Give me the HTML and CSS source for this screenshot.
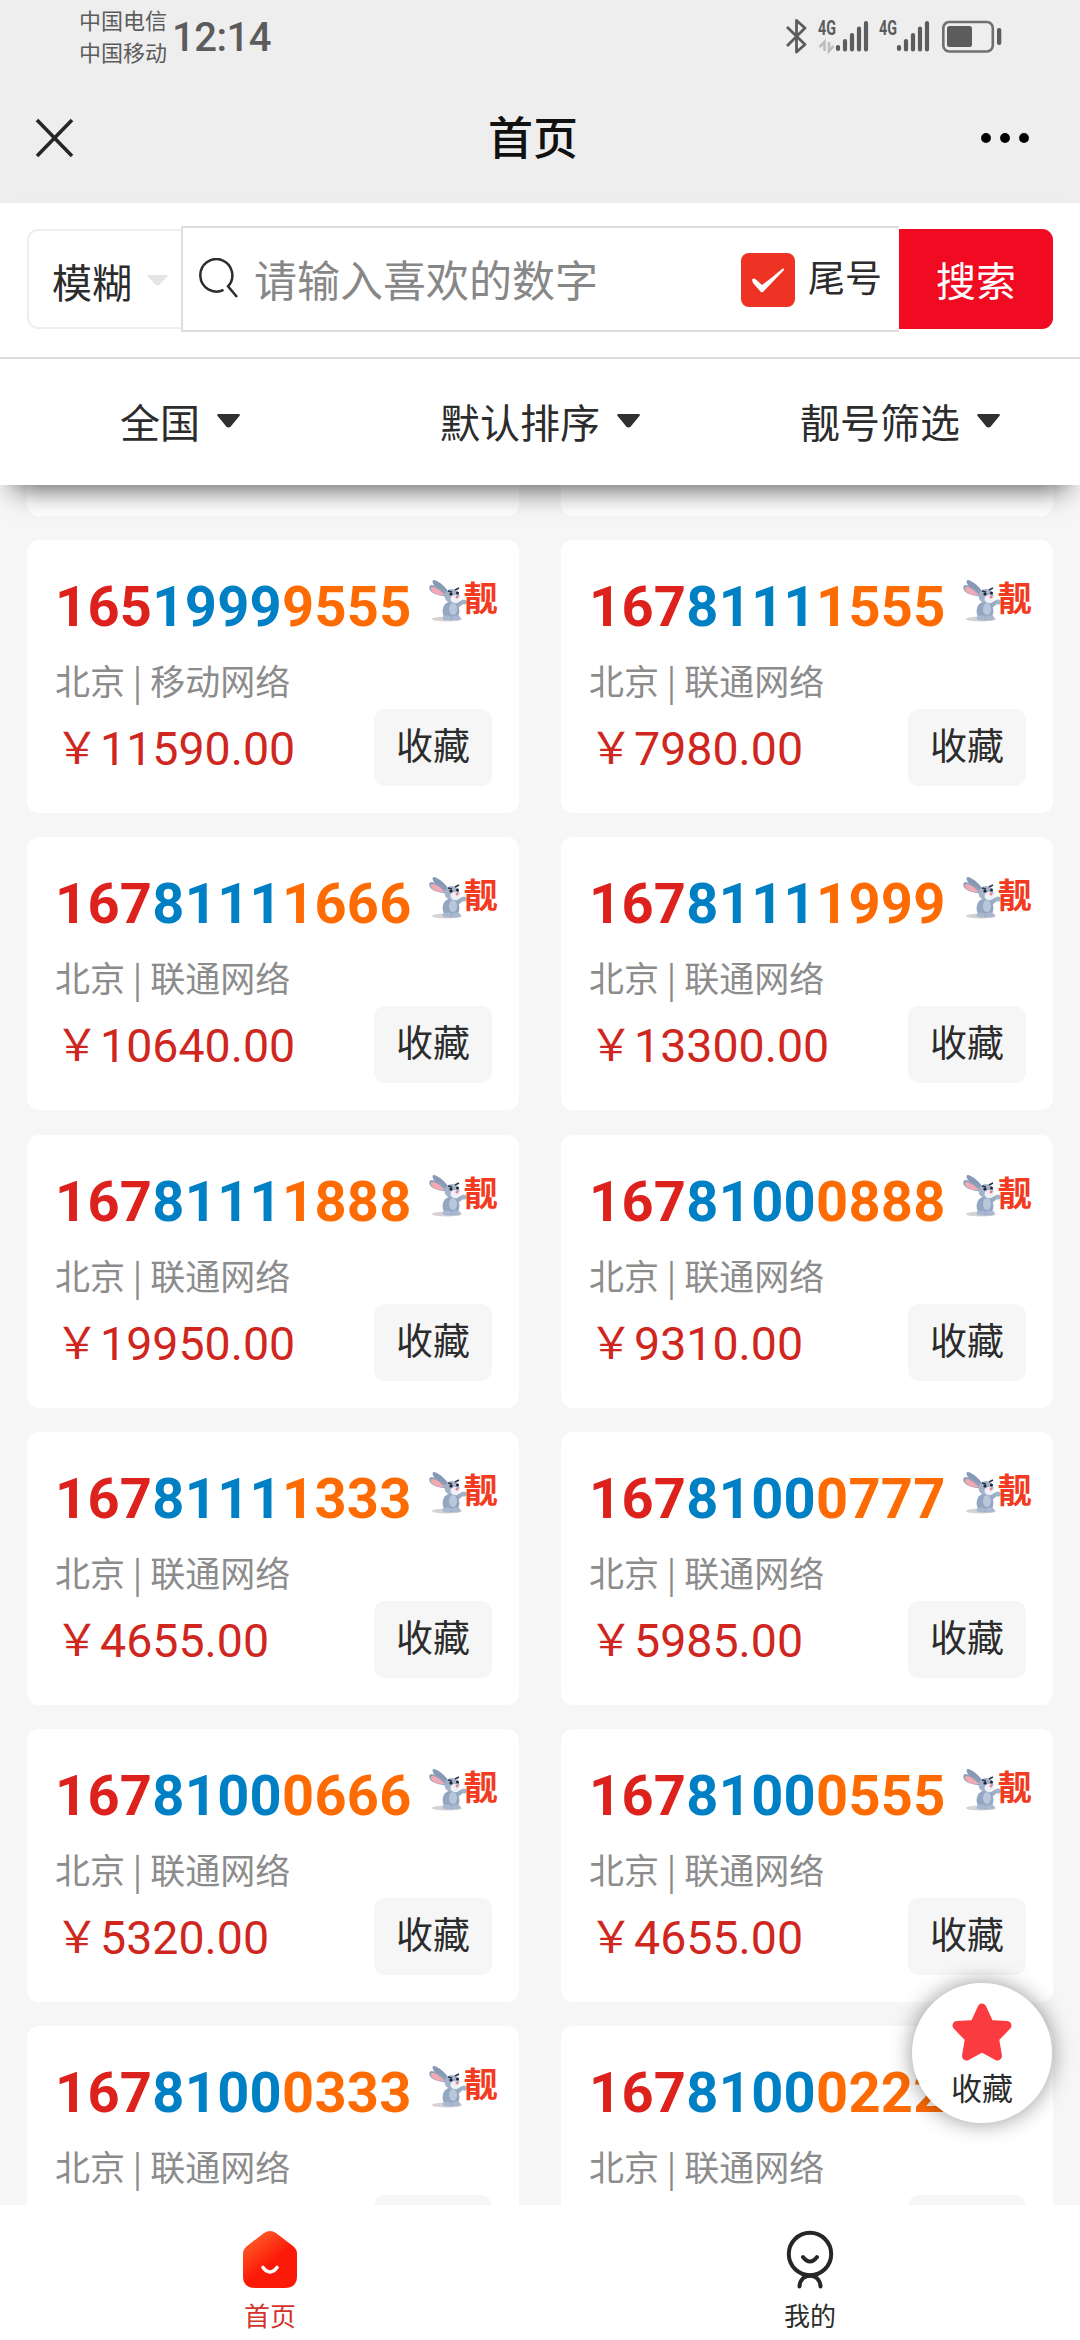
FILE: index.html
```html
<!DOCTYPE html>
<html lang="zh-CN">
<head>
    <meta charset="UTF-8">
    <meta name="viewport" content="width=device-width, initial-scale=1.0">
    <title>首页</title>
    <link rel="stylesheet" href="styles.css">
</head>
<body>
    <svg class="defs">
        <symbol id="rabbit" viewBox="0 0 38 44">
            <ellipse cx="18" cy="40" rx="15" ry="2.6" fill="#d6d2d4"/>
            <path d="M21 15C17 8 10 2 5 1c-3 0-1 5 3 8s9 6 12 8z" fill="#8799b5"/>
            <path d="M19 18C13 16 9 17 4 14 0 12-1 7 2 6c5 0 12 5 18 9z" fill="#8fa0ba"/>
            <path d="M16 16c-4 0-8 0-11-2C2 12 1 9 3 8c4 0 8 3 13 8z" fill="#f3a9b3"/>
            <path d="M26 25l7-4 2 3-7 6z" fill="#9badc4"/>
            <ellipse cx="22" cy="32" rx="8.500" ry="9.500" fill="#93a6c2"/>
            <ellipse cx="24" cy="30" rx="4" ry="6" fill="#b9c7da"/>
            <ellipse cx="18" cy="39" rx="4.500" ry="2.500" fill="#a9b8d0"/>
            <ellipse cx="27" cy="39" rx="4.500" ry="2.500" fill="#a9b8d0"/>
            <ellipse cx="23" cy="17" rx="7.500" ry="7" fill="#a3b2ca"/>
            <ellipse cx="26" cy="20" rx="4.500" ry="4" fill="#eef1f6"/>
            <path d="M19 12l4 1M26 11l4-2" stroke="#2b3140" stroke-width="1.500"/>
            <circle cx="22" cy="15" r="1.600" fill="#20242e"/>
            <circle cx="28.500" cy="14" r="1.500" fill="#20242e"/>
            <circle cx="28" cy="18" r="1.500" fill="#ee7f93"/>
            <circle cx="35" cy="23" r="2.600" fill="#a3b4ca"/>
        </symbol>
    </svg>

    <header>
        <div class="status">
            <div class="carrier">
                <span>中国电信</span>
                <span>中国移动</span>
            </div>
            <span class="clock">12:14</span>
            <svg class="status-icons" width="230" height="40" viewBox="780 15 230 40">
                <path d="M787 27l18 17.500-8.500 7.500V20.500l8.500 7.500-18 18" fill="none" stroke="#5c5c5c" stroke-width="2.800" stroke-linejoin="round"/>
                <g class="net">
                    <text x="818" y="35" textLength="18" lengthAdjust="spacingAndGlyphs">4G</text>
                    <text x="879" y="35" textLength="18" lengthAdjust="spacingAndGlyphs">4G</text>
                </g>
                <path d="M824.500 51V42l-5 5M829 42v9l4.500-5" fill="none" stroke="#bdbdbd" stroke-width="2.600"/>
                <path d="M838 47v2M845 41v8.500M852 35v14.500M859 28.500v21M866 23v26.500M899 47v2M906 41v8.500M913 35v14.500M920 28.500v21M927 23v26.500" stroke="#5c5c5c" stroke-width="4.200" stroke-linecap="round"/>
                <rect x="943.300" y="22" width="49.500" height="29.500" rx="6" fill="none" stroke="#707070" stroke-width="2.600"/>
                <rect x="947" y="26" width="25" height="21" rx="2.500" fill="#5c5c5c"/>
                <rect x="997" y="28" width="4.300" height="17" rx="2" fill="#5c5c5c"/>
            </svg>
        </div>
        <div class="nav">
            <svg width="40" height="40" viewBox="0 0 40 40"><path d="M2 2l35 36M37 2L2 38" stroke="#262626" stroke-width="3.600"/></svg>
            <h1>首页</h1>
            <svg width="50" height="12" viewBox="0 0 50 12"><circle cx="6" cy="6" r="4.900"/><circle cx="25" cy="6" r="4.900"/><circle cx="44" cy="6" r="4.900"/></svg>
        </div>
    </header>

    <div class="top">
        <div class="search">
            <div class="mode">模糊<i class="caret light"></i></div>
            <div class="field">
                <svg width="40" height="42" viewBox="0 0 40 42"><path d="M25.500 31.800a16 16.200 0 1 1 4.500-3.400L39 39" fill="none" stroke="#2c2c2c" stroke-width="2.500"/></svg>
                <span class="placeholder">请输入喜欢的数字</span>
                <span class="check">
                    <svg width="54" height="54" viewBox="0 0 54 54"><path d="M11 27c1-2 2-2 4-.5l6 5.500c8-6 14-11 20-16 2-1.500 3 0 1.500 1.500L23 38c-1.500 1.800-3 1.500-4 0l-7-8z" fill="#fff"/></svg>
                </span>
                <span class="tail">尾号</span>
            </div>
            <div class="search-btn">搜索</div>
        </div>
        <div class="filters">
            <div>全国<i class="caret"></i></div>
            <div>默认排序<i class="caret"></i></div>
            <div>靓号筛选<i class="caret"></i></div>
        </div>
    </div>

    <div class="list" id="list">
        <div class="card last-seen"></div>
        <div class="card last-seen"></div>
    </div>

    <div class="fab">
        <svg width="60" height="58" viewBox="0 0 60 58"><path d="M30 5l7.500 16.500L55 22.500 42.500 35.500 45.500 53 30 44.500 14.500 53l3-17.500L5 22.500l17.500-1z" fill="#fa3c41" stroke="#fa3c41" stroke-width="9" stroke-linejoin="round"/></svg>
        <span>收藏</span>
    </div>

    <footer>
        <div class="tab active">
            <svg width="56" height="60" viewBox="0 0 56 60">
                <defs><linearGradient id="home" x1="0.100" y1="0" x2="0.700" y2="0.800"><stop offset="0" stop-color="#ff6a2c"/><stop offset="0.700" stop-color="#fb1a08"/></linearGradient></defs>
                <path d="M22 3q6-4 12 0l17 13q4 3 4 8v22q0 12-12 12H13Q1 58 1 46V24q0-5 4-8z" fill="url(#home)"/>
                <path d="M21 37.500q7 9 14 0" fill="none" stroke="#fff" stroke-width="3.600" stroke-linecap="round"/>
            </svg>
            <span>首页</span>
        </div>
        <div class="tab">
            <svg width="56" height="60" viewBox="0 0 56 60">
                <g fill="none" stroke="#262626" stroke-width="4" stroke-linecap="round">
                    <circle cx="28" cy="24" r="21.200"/>
                    <path d="M21 27q7 9 14 0M17.500 56.500C18 42 38 42 38.500 56.500"/>
                </g>
            </svg>
            <span>我的</span>
        </div>
    </footer>

    <script>
        const numbers = [
            ["16519999555", "移动", "11590.00"],
            ["16781111555", "联通", "7980.00"],
            ["16781111666", "联通", "10640.00"],
            ["16781111999", "联通", "13300.00"],
            ["16781111888", "联通", "19950.00"],
            ["16781000888", "联通", "9310.00"],
            ["16781111333", "联通", "4655.00"],
            ["16781000777", "联通", "5985.00"],
            ["16781000666", "联通", "5320.00"],
            ["16781000555", "联通", "4655.00"],
            ["16781000333", "联通"],
            ["16781000222", "联通"]
        ];

        const list = document.getElementById("list");
        numbers.forEach(([num, net, price]) => {
            // 最后一行只露出按钮的上边缘
            const buy = price
                ? `<span class="price"><span class="yen">￥</span>${price}</span><span class="fav">收藏</span>`
                : `<span></span><span class="fav"></span>`;
            const card = document.createElement("div");
            card.className = "card";
            card.innerHTML = `
                <div class="num">
                    <b class="head">${num.slice(0, 3)}</b><b class="mid">${num.slice(3, 7)}</b><b class="end">${num.slice(7)}</b>
                    <svg class="rabbit"><use href="#rabbit"/></svg><span class="nice">靓</span>
                </div>
                <div class="area">北京 | ${net}网络</div>
                <div class="buy">${buy}</div>`;
            list.appendChild(card);
        });
    </script>
</body>
</html>
```

FILE: styles.css
```css
* {
    box-sizing: border-box;
}
body {
    margin: 0;
    width: 1080px;
    height: 2340px;
    overflow: hidden;
    display: flex;
    flex-direction: column;
    background: #f6f6f6;
    color: #2c2c2c;
    font-family: Roboto, "Noto Sans CJK SC", sans-serif;
}
svg {
    display: block;
    flex: none;
}
.defs {
    position: absolute;
    width: 0;
    height: 0;
}
header {
    height: 203px;
    flex: none;
    background: #eee;
}
.status {
    display: flex;
    height: 74px;
    padding-left: 79px;
    color: #5c5c5c;
}
.carrier {
    display: flex;
    flex-direction: column;
    padding-top: 6px;
    font-size: 22px;
    line-height: 32px;
}
.clock {
    margin-left: 5px;
    padding-top: 14px;
    font-size: 40px;
    line-height: 48px;
    letter-spacing: -0.5px;
    font-weight: 500;
}
.status-icons {
    margin: 15px 70px 0 auto;
}
.net {
    font: bold 20px Roboto, sans-serif;
    fill: #5c5c5c;
}
.nav {
    display: flex;
    align-items: center;
    justify-content: space-between;
    height: 128px;
    padding: 0 50px 0 35px;
}
.nav h1 {
    margin: 4px 0 0 11px;
    font-size: 45px;
    line-height: 60px;
    font-weight: 500;
    color: #111;
}
.top {
    position: relative;
    z-index: 1;
    height: 282px;
    flex: none;
    background: #fff;
    box-shadow: 0 18px 26px -14px rgba(0, 0, 0, .66);
}
.search {
    display: flex;
    align-items: center;
    height: 156px;
    padding: 0 27px 2px;
    border-bottom: 2px solid #ddd;
}
.mode {
    display: flex;
    align-items: center;
    width: 154px;
    height: 100px;
    padding: 3px 0 0 23px;
    border: 2px solid #eee;
    border-right: 0;
    border-radius: 11px 0 0 11px;
    font-size: 40px;
}
.caret {
    width: 23px;
    height: 14px;
    margin-left: 17px;
    margin-top: -1px;
    background: #303030;
    clip-path: polygon(5% 0, 95% 0, 100% 12%, 58% 96%, 50% 100%, 42% 96%, 0 12%);
}
.caret.light {
    height: 11px;
    width: 21px;
    margin-left: 15px;
    background: #e4e4e4;
}
.field {
    display: flex;
    align-items: center;
    width: 718px;
    height: 106px;
    padding-left: 15px;
    border: 2px solid #ddd;
    border-right: 0;
}
.placeholder {
    width: 486px;
    margin: -3px 0 0 16px;
    font-size: 43px;
    color: #878787;
}
.check {
    width: 54px;
    height: 54px;
    margin: 2px 0 0 1px;
    border-radius: 8px;
    background: #ee3324;
}
.tail {
    margin: -7px 0 0 13px;
    font-size: 37px;
}
.search-btn {
    width: 154px;
    height: 100px;
    padding-top: 4px;
    border-radius: 0 11px 11px 0;
    background: #f00a22;
    color: #fff;
    font-size: 40px;
    line-height: 100px;
    text-align: center;
}
.filters {
    display: grid;
    grid-template-columns: repeat(3, 1fr);
    height: 122px;
    font-size: 40px;
}
.filters div {
    display: flex;
    align-items: center;
    justify-content: center;
    padding-top: 2px;
}
.list {
    display: grid;
    grid-template-columns: 492px 492px;
    column-gap: 42px;
    row-gap: 24.3px;
    align-content: start;
    height: 1720px;
    padding: 0 27px;
    overflow: hidden;
    flex: none;
}
.card {
    height: 273px;
    padding: 37px 27px 0 28px;
    border-radius: 12px;
    background: #fff;
}
.card.last-seen {
    height: 30.700px;
    padding: 0;
    border-radius: 0 0 12px 12px;
}
.num {
    display: flex;
    height: 66px;
    font-size: 56px;
    line-height: 61px;
    letter-spacing: 0.300px;
}
.head {
    color: #dd211c;
}
.mid {
    color: #0080c4;
}
.end {
    color: #fe6b03;
}
.rabbit {
    width: 38px;
    height: 44px;
    margin: 2px 0 0 17px;
}
.nice {
    margin-left: -3px;
    font-size: 34px;
    font-weight: bold;
    line-height: 44px;
    color: #f23b20;
}
.area {
    margin-top: 14px;
    font-size: 35px;
    line-height: 46px;
    font-family: "Noto Sans CJK SC", sans-serif;
    color: #8c8c8c;
}
.buy {
    display: flex;
    justify-content: space-between;
    margin-top: 6px;
}
.price {
    display: flex;
    font-size: 46.500px;
    line-height: 80px;
    color: #cf2620;
}
.yen {
    margin-right: 1px;
    font-size: 44px;
}
.fav {
    width: 118px;
    height: 77px;
    border-radius: 11px;
    background: #f6f6f6;
    font-size: 37px;
    line-height: 78px;
    text-align: center;
}
.fab {
    position: absolute;
    left: 912px;
    top: 1983px;
    width: 140px;
    height: 140px;
    padding-top: 20px;
    display: flex;
    flex-direction: column;
    align-items: center;
    border-radius: 50%;
    background: #fff;
    box-shadow: 0 0 22px rgba(0, 0, 0, .42);
    font-size: 31px;
    line-height: 58px;
}
footer {
    display: flex;
    height: 135px;
    flex: none;
    background: #fff;
}
.tab {
    flex: 1;
    display: flex;
    flex-direction: column;
    align-items: center;
    padding-top: 25px;
    font-size: 26px;
    line-height: 54px;
}
.tab.active {
    color: #d4332b;
}
```
